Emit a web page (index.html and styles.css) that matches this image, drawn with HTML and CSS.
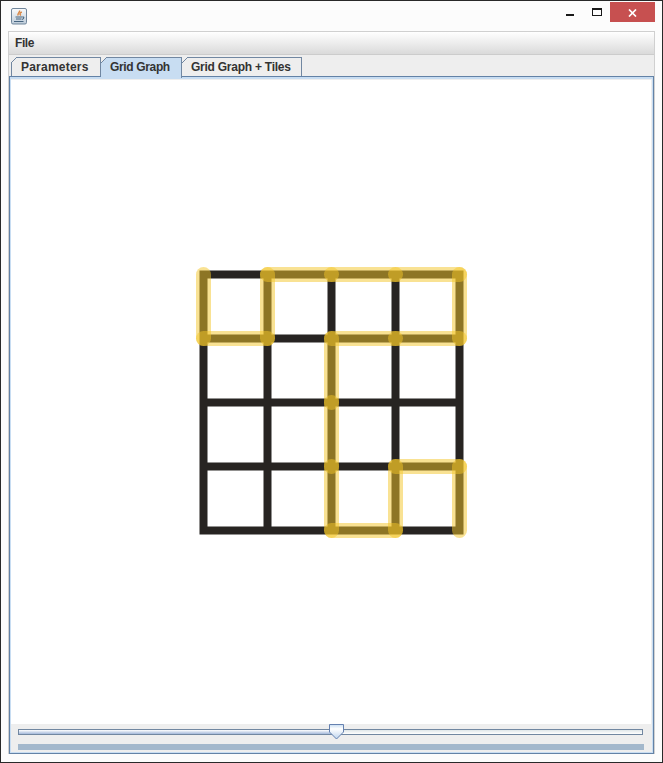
FILE: index.html
```html
<!DOCTYPE html>
<html lang="en">
<head>
<meta charset="utf-8">
<title>Grid Graph</title>
<link rel="stylesheet" href="styles.css">
</head>
<body>
<div class="window">
  <header class="titlebar">
    <svg class="app-icon" width="16" height="17" viewBox="0 0 16 17">
      <defs><linearGradient id="ic" x1="0" y1="0" x2="0" y2="1"><stop offset="0" stop-color="#fbfcfd"/><stop offset="1" stop-color="#bccbd9"/></linearGradient></defs>
      <rect x=".5" y=".5" width="15" height="15.5" rx="1.5" fill="url(#ic)" stroke="#71869b"/>
      <path d="M8.500 2.500c1 2-3 2.500-1.200 5M10.800 4c-2 1-2.500 2-1 3.500" fill="none" stroke="#d9833f" stroke-width="1.400"/>
      <path d="M4.500 9h6.500M5 11h5.500M3 13.500h9.500M11.200 9c2.300-.5 2 1.800-.2 2.500" fill="none" stroke="#46647f" stroke-width="1.100"/>
    </svg>
    <div class="controls">
      <svg class="glyphs" width="70" height="22" viewBox="0 0 70 22">
        <rect x="26" y="13" width="8" height="2" fill="#191919"/>
        <path d="M52 7h10v8H52zM53 9v5h8v-5z" fill="#191919" fill-rule="evenodd"/>
      </svg>
      <div class="close"><svg width="9" height="8" viewBox="0 0 9 8"><path d="M1 .5l7 7M8 .5l-7 7" stroke="#fff" stroke-width="1.700"/></svg></div>
    </div>
  </header>
  <main class="client">
    <nav class="menubar">File</nav>
    <div class="tabs">
      <div class="tab tab-a"><svg class="cut" width="6" height="6"><path d="M0 0H6L0 6z" fill="#eee"/><path d="M0 6L6 0" stroke="#7187a1"/></svg>Parameters</div>
      <div class="tab tab-b active"><svg class="cut" width="6" height="6"><path d="M0 0H6L0 6z" fill="#eee"/><path d="M0 6L6 0" stroke="#7187a1"/></svg>Grid Graph</div>
      <div class="tab tab-c"><svg class="cut" width="6" height="6"><path d="M0 0H6L0 6z" fill="#eee"/><path d="M0 6L6 0" stroke="#7187a1"/></svg>Grid Graph + Tiles</div>
    </div>
    <section class="panel">
      <div class="canvas">
        <svg width="280" height="280" viewBox="-12.5 -12.5 280 280">
          <path class="grid" d="M0 0H256M0 64H256M0 128H256M0 192H256M0 256H256M0 0V256M64 0V256M128 0V256M192 0V256M256 0V256"/>
          <g class="trail">
            <path d="M0 0V64"/><path d="M0 64H64"/><path d="M64 64V0"/>
            <path d="M64 0H128"/><path d="M128 0H192"/><path d="M192 0H256"/>
            <path d="M256 0V64"/><path d="M256 64H192"/><path d="M192 64H128"/>
            <path d="M128 64V128"/><path d="M128 128V192"/><path d="M128 192V256"/>
            <path d="M128 256H192"/><path d="M192 256V192"/><path d="M192 192H256"/><path d="M256 192V256"/>
          </g>
        </svg>
      </div>
      <footer class="bottom">
        <div class="slider">
          <div class="track"><div class="fill"></div></div>
          <svg class="thumb" width="16" height="17" viewBox="0 0 16 17">
            <defs><linearGradient id="th" x1="0" y1="0" x2="0" y2="1"><stop offset="0" stop-color="#c8ddf2"/><stop offset=".3" stop-color="#fff"/><stop offset="1" stop-color="#bdd4ee"/></linearGradient></defs>
            <path d="M1.500 1.500h14v7.500l-7 7L1.500 9z" fill="url(#th)" stroke="#6581b0"/>
          </svg>
        </div>
        <div class="progress"></div>
      </footer>
    </section>
  </main>
</div>
</body>
</html>
```
FILE: styles.css
```css
* { box-sizing: border-box; }
body { margin: 0; }
.window {
  width: 663px; height: 763px;
  border: 1px solid #292929;
  background: #fcfcfc;
  display: flex; flex-direction: column;
  padding: 0 7px 8px 7px;
  font: bold 12px "Liberation Sans", Arial, sans-serif;
  color: #333;
}
.titlebar { height: 30px; flex: none; display: flex; justify-content: space-between; padding-left: 3px; }
.app-icon { margin-top: 7px; }
.controls { display: flex; }
.glyphs { flex: none; }
.close { width: 45px; height: 20px; margin-top: 1px; background: #c75050; display: flex; align-items: center; justify-content: center; padding-top: 1px; }
.client { flex: 1; display: flex; flex-direction: column; background: #eee; border: 1px solid #d0d0d0; border-bottom: 0; }
.menubar { height: 23px; flex: none; padding: 0 6px; line-height: 22px; letter-spacing: -.4px; background: linear-gradient(#fff, #dadada); border-bottom: 1px solid #ccc; }
.tabs { height: 21px; flex: none; display: flex; padding: 2px 0 0 2px; }
.tab { position: relative; height: 19px; border: 1px solid #7187a1; border-left: 0; border-bottom: 0; padding-left: 9px; line-height: 19px; white-space: nowrap; }
.tab-a { width: 90px; border-left: 1px solid #7187a1; letter-spacing: .22px; }
.tab-b { width: 81px; letter-spacing: -.35px; }
.tab-c { width: 120px; letter-spacing: -.25px; }
.active { z-index: 1; height: 21px; background: #c8ddf2; }
.cut { position: absolute; left: 0; top: -1px; }
.tab-a .cut { left: -1px; }
.panel { flex: 1; display: flex; flex-direction: column; border: 1px solid #6382a6; box-shadow: inset 0 0 0 1px #c8ddf2, inset 0 2px #c8ddf2; padding: 3px 2px 2px 1px; }
.canvas { flex: 1; background: #fff; padding: 182px 0 0 180px; }
.canvas svg { display: block; }
.grid { fill: none; stroke: #272422; stroke-width: 8; stroke-linecap: square; }
.trail path { fill: none; stroke: #f3c628; stroke-opacity: .5; stroke-width: 15; stroke-linecap: round; }
.bottom { height: 27px; flex: none; padding: 5px 7px 0; background: #eee; }
.slider { position: relative; height: 15px; }
.track { height: 6px; width: 625px; border: 1px solid #7187a1; background: linear-gradient(#dfe6e9, #fff); }
.fill { width: 318px; height: 4px; background: linear-gradient(#fff, #a3b8da); }
.thumb { position: absolute; left: 310px; top: -6px; }
.progress { height: 6px; background: #a3b8cc; }
```
